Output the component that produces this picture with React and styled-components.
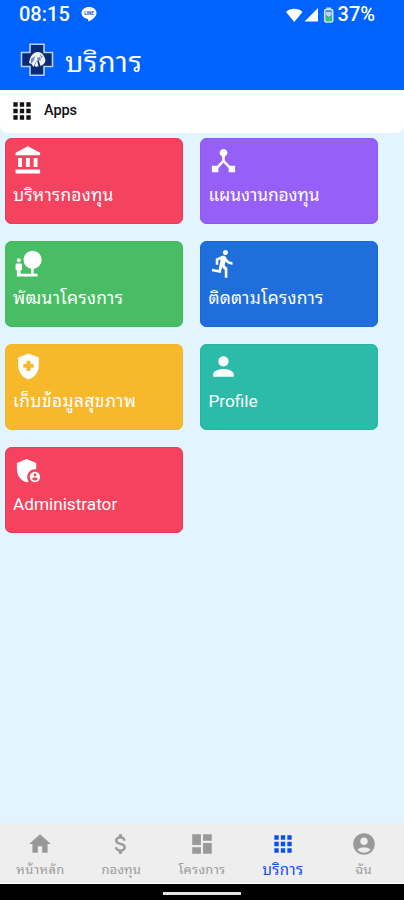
import React from "react";
import styled, { createGlobalStyle } from "styled-components";
import {
  MdDeviceHub,
  MdNaturePeople,
  MdDirectionsRun,
  MdHealthAndSafety,
  MdPerson,
  MdAdminPanelSettings,
  MdHome,
  MdAttachMoney,
  MdDashboard,
  MdApps,
  MdAccountCircle,
} from "react-icons/md";

const GlobalStyle = createGlobalStyle`
  * {
    box-sizing: border-box;
  }
  body {
    margin: 0;
    font-family: Roboto, "Noto Sans Thai Looped", Loma, Waree, Umpush, Garuda, "Noto Sans", sans-serif;
  }
  svg {
    display: block;
    flex-shrink: 0;
  }
`;

const StyledScreen = styled.div`
  display: flex;
  flex-direction: column;
  width: 404px;
  height: 900px;
  overflow: hidden;
  background: #e2f5ff;
`;

const StyledHeader = styled.header`
  height: 90px;
  background: #0062ff;
  color: white;
`;

const StyledStatusBar = styled.div`
  display: flex;
  align-items: center;
  height: 29px;
  padding: 0 29px 0 19px;
  font-size: 20px;
  font-weight: 500;
  line-height: 29px;
`;

const StyledStatusIcons = styled.div`
  display: flex;
  align-items: center;
  margin-left: auto;
`;

const StyledTitleBar = styled.div`
  display: flex;
  align-items: center;
  height: 61px;
  padding-left: 20px;
`;

const StyledTitle = styled.h1`
  margin: 7px 0 0 11px;
  font-size: 28.5px;
  font-weight: 400;
  line-height: 40px;
  white-space: nowrap;
  letter-spacing: 0.6px;
`;

const StyledSectionBar = styled.div`
  display: flex;
  align-items: center;
  height: 43px;
  padding: 0 0 2px 9px;
  border-radius: 0 0 8px 8px;
  background: white;
  color: #111;
`;

const StyledSectionName = styled.span`
  margin-left: 9px;
  font-size: 14.5px;
  font-weight: 500;
  line-height: 20px;
  letter-spacing: -0.1px;
`;

const StyledGrid = styled.main`
  display: grid;
  flex: 1;
  grid-template-columns: 178px 178px;
  grid-auto-rows: 86px;
  align-content: start;
  gap: 17.2px 17.4px;
  padding: 4.5px 5px 0;
`;

const StyledCard = styled.div`
  display: flex;
  flex-direction: column;
  padding: 7.5px 8px 0;
  border-radius: 7px;
  background: ${({ $color }) => $color};
  box-shadow: inset 0 0 0 1px ${({ $edge }) => $edge};
  color: white;
`;

const StyledCardLabel = styled.span`
  margin-top: 5.6px;
  font-size: ${({ $size }) => $size || 17.4}px;
  line-height: 26px;
  white-space: nowrap;
  letter-spacing: ${({ $spacing }) => $spacing || 0}px;
`;

const StyledNav = styled.nav`
  display: grid;
  grid-template-columns: repeat(5, 1fr);
  height: 61px;
  background: #eee;
  border-bottom: 1px solid #fff;
`;

const StyledNavItem = styled.div`
  display: flex;
  flex-direction: column;
  align-items: center;
  padding-top: 8px;
  color: ${({ $active }) => ($active ? "#0b4ff0" : "#999")};
`;

const StyledNavLabel = styled.span`
  margin-top: 1px;
  font-size: ${({ $active }) => ($active ? 15 : 13)}px;
  line-height: 24px;
  white-space: nowrap;
  letter-spacing: ${({ $spacing }) => $spacing || 0}px;
`;

const StyledSystemBar = styled.div`
  display: flex;
  justify-content: center;
  height: 16px;
  padding-top: 8px;
  background: black;
`;

const StyledHomeHandle = styled.div`
  width: 78px;
  height: 3px;
  background: #e4e4e4;
`;

const StyledChat = styled.svg`
  margin-left: 11px;
`;

const ChatIcon = () => (
  <StyledChat width="16" height="17" viewBox="0 0 16 17">
    <path
      fill="white"
      d="M8 1C3.8 1 .5 3.6.5 7c0 3 2.6 5.400 6.200 5.900.700.1.500.8.400 1.900 0 .6.300.7.900.400C10.500 14 15.500 11 15.500 7 15.500 3.600 12.200 1 8 1z"
    />
    <text
      x="8"
      y="8.700"
      textAnchor="middle"
      fontFamily="Roboto"
      fontSize="4.600"
      fontWeight="900"
      fill="#2867dd"
    >
      LINE
    </text>
  </StyledChat>
);

const SignalIcons = () => (
  <svg width="52" height="18" viewBox="0 0 52 18">
    <path fill="white" d="M0 6C4.500 1.600 12 1.600 16.500 6L8.250 16z" />
    <path fill="white" d="M18.500 15.500L32 2v13.500z" />
    <rect x="40.500" y="1.500" width="4.500" height="2" fill="#cbe3ff" />
    <rect
      x="38.700"
      y="3.500"
      width="8"
      height="12.500"
      rx="1.500"
      fill="#4388dc"
      stroke="#cbe3ee"
      strokeWidth="1.600"
    />
    <path fill="#b9d6f2" d="M40 6h5.400v3L43 11l-3-2z" />
    <path fill="#31cb69" d="M40 10.500l3 1 2.400-1.500v5H40z" />
  </svg>
);

const BankIcon = ({ size }) => (
  <svg width={size} height={size} viewBox="0 0 24 24" fill="currentColor">
    <path d="M4 10v7h3v-7H4zm6 0v7h3v-7h-3zM2 22h19v-3H2v3zm14-12v7h3v-7h-3zM11.500 1L2 6v2h19V6l-9.500-5z" />
  </svg>
);

const Logo = () => (
  <svg width="34" height="34" viewBox="0 0 34 34">
    <path
      d="M10 1.300h14v8.200h8.500v14H24v8.700H10v-8.700H1.500v-14H10z"
      fill="#082b76"
      stroke="#b9cdf2"
      strokeWidth="1.600"
    />
    <path
      d="M9 20c1-7 4-11 9-11 4 0 7 4 7.500 9-1 3-3 4-5 5l-2-6-2 1-3 6-2-3z"
      fill="#edf1f3"
    />
    <path d="M11 16l4-3-1 4-3 4zM20 11l3 3-2 1zM17 15l3-1 1 3-3 1z" fill="#718ab4" />
    <path d="M17 17l1.500 6-2 1-2-1z" fill="#f8fbff" />
  </svg>
);

const cards = [
  { label: "บริหารกองทุน", icon: BankIcon, color: "#f5425f", edge: "#ef375c", spacing: 0.2 },
  { label: "แผนงานกองทุน", icon: MdDeviceHub, color: "#965ff7", edge: "#8f58f4", spacing: -0.1 },
  { label: "พัฒนาโครงการ", icon: MdNaturePeople, color: "#49bd63", edge: "#42b95f", spacing: 0.3 },
  { label: "ติดตามโครงการ", icon: MdDirectionsRun, color: "#206edb", edge: "#1968da", spacing: 0.25 },
  { label: "เก็บข้อมูลสุขภาพ", icon: MdHealthAndSafety, color: "#f7b82b", edge: "#f4b429", spacing: 0.4 },
  { label: "Profile", icon: MdPerson, color: "#2dbba9", edge: "#24b6a3", size: 17.2 },
  { label: "Administrator", icon: MdAdminPanelSettings, color: "#f5425f", edge: "#ef375c", size: 17.2 },
];

const tabs = [
  { label: "หน้าหลัก", icon: MdHome, spacing: 0.35 },
  { label: "กองทุน", icon: MdAttachMoney, spacing: 0.1 },
  { label: "โครงการ", icon: MdDashboard, spacing: 0.2 },
  { label: "บริการ", icon: MdApps, active: true, spacing: 0.4 },
  { label: "ฉัน", icon: MdAccountCircle, spacing: 0.2 },
];

const App = () => (
  <StyledScreen>
    <GlobalStyle />
    <StyledHeader>
      <StyledStatusBar>
        08:15
        <ChatIcon />
        <StyledStatusIcons>
          <SignalIcons />
          37%
        </StyledStatusIcons>
      </StyledStatusBar>
      <StyledTitleBar>
        <Logo />
        <StyledTitle>บริการ</StyledTitle>
      </StyledTitleBar>
    </StyledHeader>
    <StyledSectionBar>
      <MdApps size={26} />
      <StyledSectionName>Apps</StyledSectionName>
    </StyledSectionBar>
    <StyledGrid>
      {cards.map(({ label, icon: Icon, color, edge, size, spacing }) => (
        <StyledCard key={label} $color={color} $edge={edge}>
          <Icon size={31} />
          <StyledCardLabel $size={size} $spacing={spacing}>
            {label}
          </StyledCardLabel>
        </StyledCard>
      ))}
    </StyledGrid>
    <StyledNav>
      {tabs.map(({ label, icon: Icon, active, spacing }) => (
        <StyledNavItem key={label} $active={active}>
          <Icon size={26} />
          <StyledNavLabel $active={active} $spacing={spacing}>
            {label}
          </StyledNavLabel>
        </StyledNavItem>
      ))}
    </StyledNav>
    <StyledSystemBar>
      <StyledHomeHandle />
    </StyledSystemBar>
  </StyledScreen>
);

export default App;
